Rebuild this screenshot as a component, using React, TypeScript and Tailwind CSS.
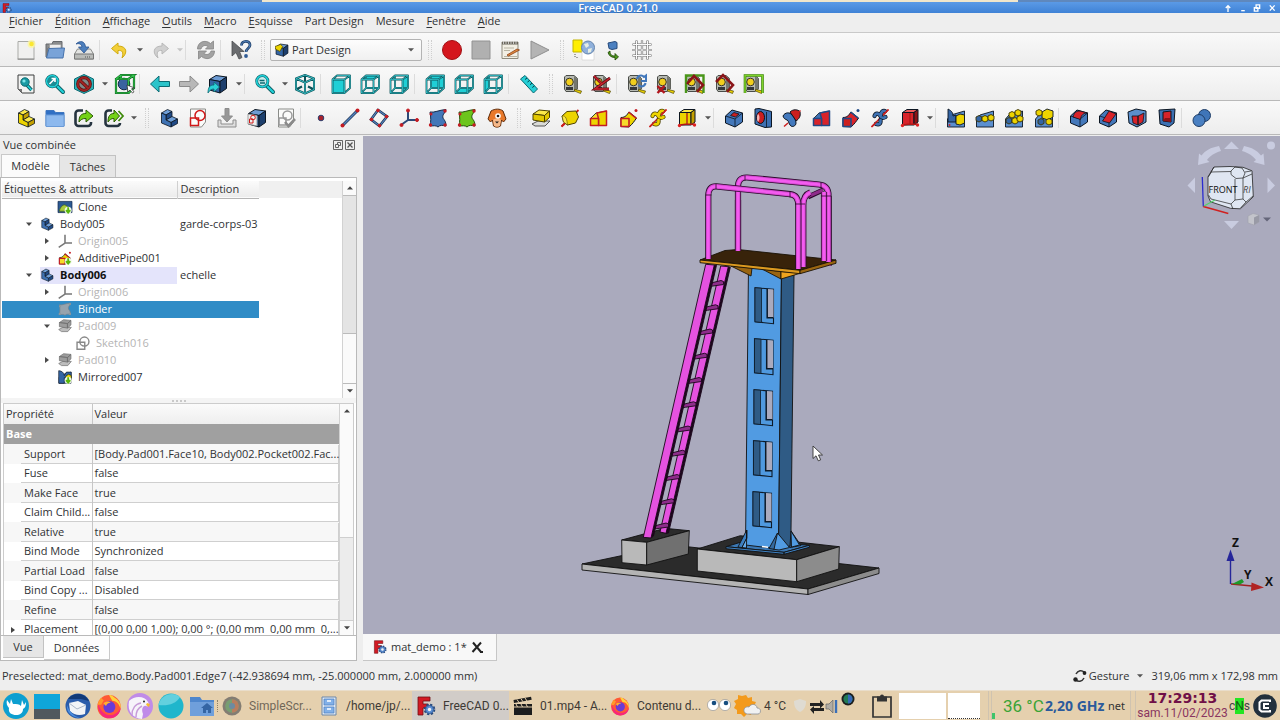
import React, { type ReactNode } from "react";

/* ---------- shared drawing pieces ---------- */

const BLUE = "#3465a4";
const NAVY = "#0b1521";
const TEAL = "#1fcfd6";

const Box = ({ t, l, r, s = NAVY }: { t: string; l: string; r: string; s?: string }) => (
  <g stroke={s} strokeWidth="1" strokeLinejoin="round">
    <path d="M1.500 5.500 8 1.500l10.500 1.500-6.500 4.500z" fill={t} />
    <path d="M1.500 5.500 12 7.500V19L1.500 16z" fill={l} />
    <path d="M12 7.500 18.500 3v11.500L12 19z" fill={r} />
  </g>
);

const Step = ({ a, b, c }: { a: string; b: string; c: string }) => (
  <g stroke={NAVY} strokeWidth=".8" strokeLinejoin="round">
    <path d="M2.500 5 8.500 1.500l4.500 2L7 7z" fill={a} />
    <path d="M7 7l6-3.500v5L7 12z" fill={c} />
    <path d="M7 12l6-3.500 5.500 2.500-6.500 3.500z" fill={a} />
    <path d="M12 14.500l6.500-3.500v4.500L12 19z" fill={c} />
    <path d="M2.500 5 7 7v5l5 2.500V19l-9.500-4z" fill={b} />
  </g>
);

const ViewCube = ({ face }: { face: string }) => {
  const faces: Record<string, ReactNode> = {
    front: <path d="M1.500 5.500h12V19h-12z" fill={TEAL} />,
    top: <path d="M1.500 5.500 6 1.500h13l-5.500 4z" fill={TEAL} />,
    right: <path d="M13.500 5.500 19 1.500V14l-5.500 5z" fill={TEAL} />,
    rear: <path d="M6 1.500h13V14H6z" fill={TEAL} />,
    bottom: <path d="M1.500 19 6 14h13l-5.500 5z" fill={TEAL} />,
    left: <path d="M1.500 5.500 6 1.500V14l-4.500 5z" fill={TEAL} />,
  };
  const outer = "M1.500 5.500h12V19h-12zM1.500 5.500 6 1.500h13l-5.500 4M19 1.500V14l-5.500 5";
  const lines = face === "front" ? outer : outer + "M6 1.500V14h13M6 14l-4.500 5";
  return (
    <g fill="none" strokeLinejoin="round">
      {faces[face]}
      <path d={lines} stroke="#0a5258" strokeWidth="1.800" />
      <path d={lines} stroke="#35c3ca" strokeWidth=".8" />
    </g>
  );
};

const Lens = ({ children }: { children?: ReactNode }) => (
  <g>
    <path d="m11 11 7 7" stroke="#0b5a60" strokeWidth="4" strokeLinecap="round" />
    <path d="m11 11 7 7" stroke={TEAL} strokeWidth="2.400" strokeLinecap="round" />
    <circle cx="7.300" cy="7.300" r="5.600" fill="#c9eced" stroke="#0b5a60" strokeWidth="2.800" />
    <circle cx="7.300" cy="7.300" r="5.600" fill="none" stroke={TEAL} strokeWidth="1.700" />
    {children}
  </g>
);

const Tape = ({ children }: { children?: ReactNode }) => (
  <g>
    <path d="M3 1.500h8l3.500 3V15L11 17.500H3L1.500 15V3z" fill="#b7bab3" stroke="#4a4d49" />
    <path d="M11 2l3.500 3v10L11 17z" fill="#74776f" />
    <circle cx="6.500" cy="8" r="3.800" fill="#f2cf1d" stroke="#34322a" />
    <path d="M3 13h7v3H3z" fill="#35373a" />
    <path d="m11.500 15.500 7 1.500-1 2.500-6-2.500z" fill="#edd400" stroke="#4e4300" strokeWidth=".7" />
    {children}
  </g>
);

const Doc = () => <path d="M2.500 1h15v13l-4 5h-11z" fill="#fbfbfa" stroke="#8a8c88" />;

const FreeCad = () => (
  <g>
    <path d="M2 1h12v4H7v3h5v4H7v7H2z" fill="#d31a24" stroke="#6e0f14" strokeWidth=".8" />
    <circle cx="13.500" cy="13.500" r="4.300" fill="#6e9bd8" stroke="#25477a" strokeWidth="3" strokeDasharray="2 1.380" />
    <circle cx="13.500" cy="13.500" r="4" fill="#5d8fd2" stroke="#2e5998" strokeWidth=".8" />
    <circle cx="13.500" cy="13.500" r="1.700" fill="#f2f2f2" />
  </g>
);

const Firefox = () => (
  <g>
    <circle cx="10" cy="10.500" r="9" fill="#ff5a36" />
    <path d="M10 1.500c3 0 4 2 5 2.500 3 2 4.500 5 3.800 8C18 9 16 6 12.500 6z" fill="#ffd23a" />
    <path d="M1.500 8c0 8 4 11.500 9 11.500s8.500-4 8.500-8.500c-1 3-4 6-8 6S3.500 14 1.500 8z" fill="#f7277b" />
    <path d="M1.200 9C2 6 3 5 4 3.500c.5 1 1 1.500 2 2L4 9z" fill="#ff9a2a" />
    <circle cx="10.300" cy="10.800" r="4.600" fill="#6a3bd6" />
    <path d="M5.700 8c2-2 5-1.500 5.500-.5-2 0-3 1-3.500 2.500z" fill="#ffb02e" />
  </g>
);

const Origin = ({ c, d }: { c: string; d: string }) => (
  <g stroke={c} fill={d}>
    <path d="M9 3v9M9 12h9M9 12l-7 5" strokeWidth="2" fill="none" />
    <circle cx="9" cy="2.500" r="1.500" stroke={d} />
    <circle cx="18" cy="12" r="1.500" stroke={d} />
    <circle cx="2.500" cy="17" r="1.500" stroke={d} />
  </g>
);

const Shape = ({ c, k, dot }: { c: string; k: string; dot: string }) => (
  <g>
    <path d="M2 4c4 1 9-2 16-2.500-1 4-4 5-3 8.500 1 2 3 3 3 8-4-1-6-1-8 1-2-2-5-1-8-1 1-5 1-8 0-14z" fill={c} stroke={k} />
    <circle cx="17" cy="3" r="1.700" fill={dot} />
    <circle cx="2.500" cy="17" r="1.700" fill={dot} />
    <circle cx="17" cy="17" r="1.700" fill={dot} />
    <circle cx="3" cy="6" r="1.500" fill={dot} />
  </g>
);

const Helix = ({ c, k }: { c: string; k: string }) => (
  <g strokeLinecap="round" fill="none">
    <path d="M18 2 2 18.500" stroke="#cc1f1f" strokeWidth="1.600" />
    <path d="M4.500 8c1-3 4-3 5.500-.5s3 3 5.500 1.500M6 16c3 1 5 0 4.500-4M11 7c0-3 1.500-4.500 4-4" stroke={k} strokeWidth="4.200" />
    <path d="M4.500 8c1-3 4-3 5.500-.5s3 3 5.500 1.500M6 16c3 1 5 0 4.500-4M11 7c0-3 1.500-4.500 4-4" stroke={c} strokeWidth="2.700" />
    <path d="m2 18.500 4-4M13.500 6.500 18 2" stroke="#cc1f1f" strokeWidth="1.600" />
  </g>
);

const Revolve = ({ c, k, r }: { c: string; k: string; r: string }) => (
  <g>
    <path d="M1.500 18.500 6 14.500M15.500 5 18.500 2" stroke="#cc1f1f" strokeWidth="1.800" />
    <path d="M2 8l5-4.500 9-.5 2.500 6-3 6-8 2-4-3z" fill={c} stroke={k} />
    <path d="M2 8c4-1 5 4 5.500 9l-4-3z" fill={r} stroke={k} strokeWidth=".6" />
    <path d="m1.500 18.500 3-3" stroke="#cc1f1f" strokeWidth="1.800" />
  </g>
);

const Loft = ({ c, d, e }: { c: string; d: string; e: string }) => (
  <g strokeLinejoin="round">
    <path d="M1.500 10.500 7 5l10.500-2v14.500h-16z" fill={d} stroke={NAVY} strokeWidth=".8" />
    <path d="M9.500 10.500 8 5l9.500-2v14.500h-8z" fill={c} stroke={e} strokeWidth="1.500" />
    <path d="M1.500 10.500h8v7h-8z" fill={c} stroke={e} strokeWidth="1.500" />
  </g>
);

const Pipe = ({ c, d, e }: { c: string; d: string; e: string }) => (
  <g strokeLinejoin="round">
    <path d="M2 9.500c5 0 6-3 8-5.500l7.500 6c-2 3-4 6-7.500 9l-8-.5z" fill={c} stroke={NAVY} />
    <path d="M2 10.500h8V18.500H2z" fill={d} stroke={e} strokeWidth="1.600" />
    <path d="m9.500 4 8 6.500" stroke={e} strokeWidth="1.600" />
    <circle cx="17" cy="2.500" r="1.500" fill={e} />
  </g>
);

const Prim = ({ t, l, r }: { t: string; l: string; r: string }) => (
  <g>
    <path d="M2.500 4.500 7 1.500h11l-4 3z" fill={t} stroke={NAVY} />
    <path d="M2.500 4.500H14V17H2.500z" fill={l} stroke={NAVY} />
    <path d="M14 4.500l4-3V14l-4 3z" fill={r} stroke={NAVY} />
    <path d="M10 5v11M10 16l-7 1M10 16l8 .5" stroke="#b01818" strokeWidth="1.300" />
    <circle cx="2.500" cy="17.500" r="1.700" fill="#d22" />
    <circle cx="17.500" cy="17" r="1.700" fill="#d22" />
  </g>
);

const Pattern = ({ children }: { children: ReactNode }) => (
  <g stroke={NAVY} strokeWidth=".9">
    <path d="M1.500 11 5 7l13.500-4V19h-17z" fill="#5b8fcf" />
    {children}
  </g>
);

const Blob = ({ x, y, c = "#edd400" }: { x: number; y: number; c?: string }) => (
  <path d={`M${x} ${y}l3-1.500 3 1.500v3.500l-3 1.500-3-1.500z`} fill={c} stroke="#3b3200" />
);

const Block = ({ children }: { children?: ReactNode }) => (
  <g strokeLinejoin="round">
    <path d="M1.500 8 8 2l10.500 3v9L11 19 1.500 15z" fill="#4478ba" stroke={NAVY} />
    <path d="M1.500 8 11 11l7.500-6M11 11v8" stroke={NAVY} strokeWidth=".8" fill="none" />
    {children}
  </g>
);

const icons: Record<string, ReactNode> = {
  new: (
    <g>
      <path d="M2 1.500h16V19H2z" fill="#f0f0ef" stroke="#a9aaa7" />
      <path d="M1.500 19.200h17" stroke="#777" strokeWidth=".8" />
      <circle cx="15.500" cy="4" r="4" fill="#fdf6a0" opacity=".8" />
      <circle cx="15.500" cy="4" r="2.300" fill="#fbe731" />
    </g>
  ),
  open: (
    <g>
      <path d="M1 4h6l1-2.500h9V8H3v9H1z" fill="#8a8c8d" stroke="#66696c" />
      <path d="M4.500 4.500H16V12H4.500z" fill="#ededed" stroke="#999" strokeWidth=".7" />
      <path d="M4 8.500 19.500 8 18 18H1.500z" fill="#79a3d8" stroke="#4571ab" />
    </g>
  ),
  save: (
    <g>
      <path d="M3.500 9h13l3 5v5H.5v-5z" fill="#e3e4e2" stroke="#8b8d8a" />
      <path d="M.5 14h19v5H.5z" fill="#b9bbb8" stroke="#777" />
      <path d="M11 17h6" stroke="#555" strokeDasharray="1 1" />
      <path d="M2 4c4-4 9-3 9.500 3h3.500l-5 6-5.500-6H8C7.500 4 5 3 2 4z" fill="#4d7fbd" stroke="#2c5590" strokeWidth=".8" />
    </g>
  ),
  undo: <path d="M8 3 1.500 8.500 8 14v-3.500c4-.5 6 1.500 4 7.500 6-5 5-12-4-12z" fill="#f3cf3a" stroke="#d0ab10" />,
  redo: <path d="M12 3l6.500 5.500L12 14v-3.500c-4-.5-6 1.500-4 7.500-6-5-5-12 4-12z" fill="#d0d0d0" stroke="#b8b8b8" />,
  refresh: (
    <g fill="#a2a2a2" stroke="#858585" strokeWidth=".8">
      <path d="M1.500 9C1.500 2 9-1 14.500 3.500L17.500 1v8H9.500l2.500-2.500C9.500 4.500 6 5.500 5 9z" />
      <path d="M18.500 11c0 7-7.500 10-13 5.500L2.500 19v-8h8L8 13.500c2.500 2 6 1 7-2.500z" />
    </g>
  ),
  whats: (
    <g>
      <path d="M1 1v15l4-3.500L8 19l3-1.500L8.500 11.500H13z" fill="#6a6c6f" stroke="#4a4c4f" strokeWidth=".8" />
      <path d="M10.500 5.500C10.500 0 19 0 19 5c0 3.500-4 3.500-4 7" fill="none" stroke="#24466f" strokeWidth="2.800" />
      <path d="M10.500 5.500C10.500 0 19 0 19 5c0 3.500-4 3.500-4 7" fill="none" stroke="#5a8ac6" strokeWidth="1" />
      <circle cx="15" cy="16" r="1.900" fill="#2f5b95" />
    </g>
  ),
  record: <circle cx="10" cy="10" r="9.500" fill="#d4161d" stroke="#a01014" />,
  stop: <path d="M1 1h18v18H1z" fill="#b0b0b0" stroke="#929292" />,
  macros: (
    <g>
      <path d="M2 2h16v16.500H2z" fill="#f2efe4" stroke="#8f8b7c" />
      <path d="M2 2h16v2.500H2z" fill="#6b675c" />
      <path d="M3.500 1v3M6 1v3M8.500 1v3M11 1v3M13.500 1v3M16 1v3" stroke="#ddd" strokeWidth=".8" />
      <path d="M4 8h10M4 10.500h6M4 16.500h13" stroke="#b8b4a4" />
      <path d="m7 15 10-6 2.500 1L8.500 16z" fill="#e08a3c" stroke="#8a3d16" strokeWidth=".8" />
    </g>
  ),
  play: <path d="M1 1v18l18-9z" fill="#b4b4b4" stroke="#8f8f8f" />,
  web: (
    <g>
      <path d="M-1 0h9v12H-1z" fill="#ffee00" stroke="#c2b400" />
      <path d="M8 10h12v10H8z" fill="#fff" stroke="#ccc" strokeWidth=".6" />
      <circle cx="14" cy="7.500" r="6.500" fill="#8fb0db" stroke="#6484ab" />
      <path d="M10 4l4-1 1 3-3 2zM14 9l4-1-1 4-3 1z" fill="#e6ede3" />
      <path d="M1 14v4M3 17v2" stroke="#555" strokeDasharray="1 1" />
    </g>
  ),
  part: (
    <g>
      <path d="M5 3l7-1.500 2 1v6l-5 1-3-1z" fill="#4b80c0" stroke="#274b7c" />
      <path d="M7 11c0 4 2 5 5 5v-2.500l3.500 3.500-3.500 3v-2.500c-4 0-6-2-7-5z" fill="#4e9a1e" stroke="#1d4204" strokeWidth=".8" />
    </g>
  ),
  grid: (
    <g fill="none">
      <path d="M4.500 .5v19M10 .5v19M15.500 .5v19M.5 4.500h19M.5 10h19M.5 15.500h19" stroke="#6a6a6a" strokeWidth="2.200" />
      <path d="M4.500 1v18M10 1v18M15.500 1v18M1 4.500h18M1 10h18M1 15.500h18" stroke="#fafafa" strokeWidth="1" />
    </g>
  ),
  fitall: (
    <g>
      <path d="M2 1h16v18H6l-4-4z" fill="#f3f3f2" stroke="#3d3f3e" />
      <path d="M2 15h4v4z" fill="#777" />
      <path d="m10 10 5.500 6" stroke="#0b5a60" strokeWidth="3.400" />
      <path d="m10 10 5.500 6" stroke={TEAL} strokeWidth="1.800" />
      <circle cx="9" cy="8" r="4.200" fill="#1a9ba4" stroke="#0b6a72" />
      <circle cx="8" cy="7" r="1.600" fill="#7ee5e9" />
    </g>
  ),
  fitsel: (
    <Lens>
      <circle cx="7.300" cy="7.300" r="4.800" fill="#1b8d95" />
      <path d="m4.500 10 5-5M6.500 4.500H10V8" stroke="#fff" strokeWidth="1.600" fill="none" />
    </Lens>
  ),
  style: (
    <g>
      <path d="M10 .5 19.500 5v10L10 19.500.5 15V5z" fill="#2cb3ba" stroke="#0b6a72" />
      <circle cx="10" cy="10" r="6.300" fill="#7f8a8a" stroke="#5a1414" strokeWidth="3.200" />
      <path d="M5.500 6l9 8.500" stroke="#5a1414" strokeWidth="3.200" />
      <circle cx="10" cy="10" r="6.300" fill="none" stroke="#a32222" strokeWidth="1.800" />
      <path d="M5.500 6l9 8.500" stroke="#a32222" strokeWidth="1.800" />
    </g>
  ),
  bbox: (
    <g fill="none">
      <circle cx="9" cy="10" r="5.800" fill="#3a639f" stroke="#15294a" />
      <path d="M1 5h12.500v14H1zM1 5l5-4h13l-5.500 4M19 1v13l-5.500 5M6 1v4" stroke="#0e5c1c" strokeWidth="2.200" />
      <path d="M1 5h12.500v14H1zM1 5l5-4h13l-5.500 4M19 1v13l-5.500 5M6 1v4" stroke="#2fc04a" strokeWidth="1.200" />
      <path d="m12 11 1 7 2-2 2.500 3 1.500-1.200-2.500-3 3-.8z" fill="#fff" stroke="#222" strokeWidth=".7" />
    </g>
  ),
  left: <path d="M.5 10 9 2v5.500h10.500v5H9V18z" fill="#2bc4ca" stroke="#0b6a72" />,
  right: <path d="M19.500 10 11 2v5.500H.5v5H11V18z" fill="#b8b8b8" stroke="#8b8b8b" />,
  linkview: (
    <g>
      <Box t="#6d9bd3" l="#3465a4" r="#1d3f6d" />
      <path d="M0 19c0-6 2-8 6-8V8l5.500 5L6 18v-3c-3 0-4 1-6 4z" fill="#2bd0d6" stroke="#0b6a72" strokeWidth=".8" />
    </g>
  ),
  zoom: (
    <Lens>
      <path d="M4.500 6.500h5M10 9H5" stroke="#0b6a72" strokeWidth="1.600" />
    </Lens>
  ),
  iso: (
    <g fill="none" strokeLinejoin="round">
      <path d="M10 1 19 4.500v11L10 19.500 1 15.500v-11zM1 4.500l9 4 9-4M10 8.500v11M10 1v6M1 15.500l6-3M19 15.500l-6-3" stroke="#0a5258" strokeWidth="2" />
      <path d="M10 1 19 4.500v11L10 19.500 1 15.500v-11zM1 4.500l9 4 9-4M10 8.500v11" stroke="#39bdc4" strokeWidth="1" />
    </g>
  ),
  vfront: <ViewCube face="front" />,
  vtop: <ViewCube face="top" />,
  vright: <ViewCube face="right" />,
  vrear: <ViewCube face="rear" />,
  vbottom: <ViewCube face="bottom" />,
  vleft: <ViewCube face="left" />,
  ruler: (
    <g>
      <path d="M1.500 5 6 1.500 18.500 15 14.500 19z" fill="#25cfd6" stroke="#0b6a72" />
      <path d="m8 4-2 1.500M10.500 6.500l-2 1.500M13 9.200l-2 1.500M15.300 12l-2 1.500" stroke="#063f44" />
    </g>
  ),
  tape: <Tape />,
  tapeang: (
    <Tape>
      <path d="M18 4 3 15h14M2 2l8 8" fill="none" stroke="#5c0f16" strokeWidth="2.800" />
      <path d="M18 4 3 15h14M2 2l8 8" fill="none" stroke="#c9202c" strokeWidth="1.500" />
    </Tape>
  ),
  taperef: (
    <Tape>
      <path d="M10 5a4 4 0 0 1 7-2l2-1.500V7h-5M18.500 9a4 4 0 0 1-7 2" fill="none" stroke="#4177bb" strokeWidth="2" />
    </Tape>
  ),
  tapedel: (
    <Tape>
      <path d="m1.500 12 7 7M8.500 12l-7 7" stroke="#b3151c" strokeWidth="2.400" />
    </Tape>
  ),
  tapeall: (
    <Tape>
      <path d="M1 19V1.500h17.500V19" fill="none" stroke="#4a961a" strokeWidth="2.400" />
      <path d="m2 10 7-8 9 9-6 7" fill="none" stroke="#8a1519" strokeWidth="2.600" />
    </Tape>
  ),
  tape3d: (
    <Tape>
      <path d="m1 8 7-7 10 10-6 7" fill="none" stroke="#8a1519" strokeWidth="2.600" />
    </Tape>
  ),
  tapedelta: (
    <Tape>
      <path d="M1 19V1.500h17.500V19" fill="none" stroke="#3a7d0b" strokeWidth="2.600" />
      <path d="M1 19V1.500h17.500V19" fill="none" stroke="#7ed32a" strokeWidth="1.400" />
    </Tape>
  ),
  ypart: <Step a="#fbe94a" b="#edd400" c="#c4a000" />,
  folder: (
    <g>
      <path d="M1 2.500h8l1.500 2H19V18H1z" fill="#2f6fc4" stroke="#3f76bf" />
      <path d="M1 7h18v11.500H1z" fill="#8db9ee" stroke="#6a9bd8" />
    </g>
  ),
  link: (
    <g>
      <path d="M9 2.500H4.500a3 3 0 0 0-3 3V15a3 3 0 0 0 3 3H14a3 3 0 0 0 3-3v-1" fill="none" stroke="#263440" strokeWidth="2.600" />
      <path d="M5 14c0-6 2-8.500 7-8.500V2l7 6-7 6v-3.500c-4 0-5 1-7 3.500z" fill="#73d216" stroke="#2b5a05" />
    </g>
  ),
  linkgrp: (
    <g>
      <path d="M8 2.500H4.500a3 3 0 0 0-3 3V15a3 3 0 0 0 3 3H13a3 3 0 0 0 3-3" fill="none" stroke="#263440" strokeWidth="2.600" />
      <path d="M4 14c0-6 2-8.500 6-8.500V2l5.500 6-5.500 6v-3.500c-3 0-4 1-6 3.500z" fill="#73d216" stroke="#2b5a05" />
      <path d="m14.500 3 4.500 5-4.500 5" fill="none" stroke="#3f8a0a" strokeWidth="1.800" />
    </g>
  ),
  body: <Step a="#6f9fd8" b="#3f72b3" c="#204a87" />,
  sketch: (
    <g>
      <Doc />
      <path d="M2.500 10h8v7.500h-8z" fill="none" stroke="#d01818" strokeWidth="1.500" />
      <circle cx="12" cy="7.500" r="5" fill="none" stroke="#d01818" strokeWidth="1.500" />
    </g>
  ),
  import: (
    <g fill="#bdbdbd" stroke="#8d8d8d">
      <path d="M1 12h3v4h12v-4h3v7H1z" fill="#dedede" />
      <path d="M8 .5h4V8h3.500L10 14 4.500 8H8z" fill="#979797" />
    </g>
  ),
  mapsketch: (
    <g>
      <Box t="#6d9bd3" l="#3465a4" r="#1d3f6d" />
      <path d="M1 6l9 1.500V18L1 16z" fill="#eee" stroke="#888" strokeWidth=".8" />
      <circle cx="6" cy="9.500" r="2.300" fill="none" stroke="#d01818" />
      <path d="M2.500 11H6v4H2.500z" fill="none" stroke="#d01818" />
    </g>
  ),
  valid: (
    <g>
      <Doc />
      <path d="M3 10h7v7H3z" fill="none" stroke="#999" strokeWidth="1.500" />
      <circle cx="11.500" cy="7.500" r="4.500" fill="none" stroke="#999" strokeWidth="1.500" />
      <path d="m9 14 3.500 4L19 11" fill="none" stroke="#8a8a8a" strokeWidth="2.600" />
    </g>
  ),
  point: <circle cx="10" cy="10" r="2.800" fill="#a8222c" stroke="#2d3f6e" />,
  line: (
    <g>
      <path d="M3 17 17 3" stroke="#1b3050" strokeWidth="2.800" />
      <path d="M3 17 17 3" stroke="#5584bf" strokeWidth="1.400" />
      <circle cx="2.500" cy="17.500" r="2" fill="#c41c24" />
      <circle cx="17.500" cy="2.500" r="2" fill="#c41c24" />
    </g>
  ),
  plane: (
    <g>
      <path d="M9 2 18 8.500 10.500 18 2 11.500z" fill="none" stroke="#1b3050" strokeWidth="2.600" />
      <path d="M9 2 18 8.500 10.500 18 2 11.500z" fill="none" stroke="#5584bf" strokeWidth="1.200" />
      <g fill="#c41c24"><circle cx="9" cy="2.500" r="1.800" /><circle cx="17.500" cy="8.500" r="1.800" /><circle cx="10.500" cy="17.500" r="1.800" /><circle cx="2.500" cy="11.500" r="1.800" /></g>
    </g>
  ),
  lcs: <Origin c="#2c4a78" d="#c41c24" />,
  shape: <Shape c="#4277b8" k="#15294a" dot="#c41c24" />,
  subshape: <Shape c="#6cc51c" k="#24500a" dot="#c41c24" />,
  clone: (
    <g>
      <path d="M4 3c4-2.500 9-2.500 12 0l3 8-2.500 3-2-2-1 6c-2 1.500-5 1.500-7 0l-1-6-2 2L1 11z" fill="#e8792b" stroke="#5e2a08" />
      <path d="M6 12c2-2 6-2 8 0l-1 6c-2 1-4 1-6 0z" fill="#f6b98a" />
      <circle cx="11" cy="8" r="2.800" fill="#fff" /><circle cx="11" cy="8" r="1.300" fill="#111" />
      <path d="M8 13.500h4l-2 2z" fill="#222" />
    </g>
  ),
  pad: (
    <g strokeLinejoin="round">
      <path d="M1 16l6-3h12l-5 5H4z" fill="#dadbd8" stroke="#555" />
      <path d="M2 6l6-4 10.500 1-5 4.500z" fill="#fbe94a" stroke="#4e4300" />
      <path d="M2 6l11.500 1.500V14L2 12zM13.500 7.500l5-4.500v6.500l-5 4.500z" fill="#e2c800" stroke="#4e4300" />
    </g>
  ),
  revol: <Revolve c="#edd400" k="#4e4300" r="#fbe94a" />,
  loft: <Loft c="#edd400" d="#f6dc2a" e="#c41c24" />,
  pipe: <Pipe c="#edd400" d="#f6dc2a" e="#c41c24" />,
  helix: <Helix c="#edd400" k="#4e4300" />,
  prim: <Prim t="#fbe94a" l="#edd400" r="#c4a000" />,
  pocket: (
    <Block>
      <path d="M6.500 7.500l3.500-3 5 1.500-3.500 3z" fill="#cc1f1f" stroke={NAVY} strokeWidth=".8" />
    </Block>
  ),
  hole: (
    <g>
      <path d="M2 1l4-.5 12.500 3V19L12 19.500 2 16z" fill="#3d70b2" stroke={NAVY} />
      <path d="M13.500 4v15" stroke={NAVY} strokeWidth=".8" />
      <ellipse cx="7.500" cy="9.500" rx="4" ry="6" fill="#cc1f1f" stroke={NAVY} />
      <path d="M5 6c2 1 2 6 0 8-1.500-2-1.500-6 0-8z" fill="#f3b5b5" />
    </g>
  ),
  groove: (
    <g>
      <path d="M8 4c3-3 8-3 10 0 1 4-1 7-4 9z" fill="#cc1f1f" stroke={NAVY} />
      <path d="M1 8c2-4 7-4 9-1s4 5 4 8-4 5-6 2-1-4-3-5-3-1-4-4z" fill="#4379bd" stroke={NAVY} />
      <path d="M2 18.500 6 15M13 8l5.500-5.500" stroke="#cc1f1f" strokeWidth="1.500" />
    </g>
  ),
  subloft: <Loft c="#d8232a" d="#3f72b3" e="#204a87" />,
  subpipe: <Pipe c="#d8232a" d="#cc1f1f" e="#204a87" />,
  subhelix: <Helix c="#3f72b3" k={NAVY} />,
  subprim: <Prim t="#ef5a5a" l="#d8232a" r="#8e1216" />,
  mirror: (
    <Pattern>
      <path d="M2 1c4 2 5 4 5 7l3-1v7H2z" fill={BLUE} />
      <path d="M10 8l4-2 4.500 1v8L14 17l-4-1z" fill="#edd400" />
      <circle cx="3.500" cy="17" r="1" fill="#c22" stroke="none" />
    </Pattern>
  ),
  linpat: (
    <Pattern>
      <Blob x={1} y={9} c={BLUE} /><Blob x={7} y={9} /><Blob x={13} y={8} />
    </Pattern>
  ),
  polpat: (
    <Pattern>
      <Blob x={5} y={5} /><Blob x={11} y={3} /><Blob x={2} y={11} c={BLUE} /><Blob x={8} y={11} /><Blob x={13} y={9} />
    </Pattern>
  ),
  multi: (
    <Pattern>
      <path d="M8 4l5-3 6 2v6l-5 3-6-2z" fill="#edd400" /><Blob x={2} y={3} c="#edd400" /><Blob x={4} y={12} c={BLUE} /><Blob x={12} y={12} />
    </Pattern>
  ),
  fillet: (
    <Block>
      <path d="M4 9c1-4 3-6 7-6l7.500 2c-4 0-6.500 2-7 6.500z" fill="#d8232a" stroke={NAVY} strokeWidth=".8" />
    </Block>
  ),
  chamfer: (
    <Block>
      <path d="M4.500 13 11 3l7 3-6.500 9z" fill="#d8232a" stroke={NAVY} strokeWidth=".8" />
    </Block>
  ),
  draft: (
    <g strokeLinejoin="round">
      <path d="M1 4l8-3 10 2v11l-9 5-8-4z" fill="#5b8fcd" stroke={NAVY} />
      <path d="M5 8h6v9l-5-2zM11 8l6-3-1 9-5 3z" fill="#d8232a" stroke={NAVY} strokeWidth=".8" />
    </g>
  ),
  thick: (
    <g strokeLinejoin="round">
      <path d="M2 2l16-1-1 14-5 4-9-3z" fill="#3d70b2" stroke={NAVY} />
      <path d="M6 4l8-1v11l-8-1z" fill="#d8232a" stroke={NAVY} />
      <path d="M6 13l2-3h6v4z" fill="#8e1216" />
    </g>
  ),
  bool: (
    <g stroke="#1d3c66">
      <circle cx="12.500" cy="7.500" r="6" fill="#3f75b8" />
      <circle cx="7" cy="12.500" r="6" fill="#4a80c2" />
    </g>
  ),
  freecad: <FreeCad />,
};

const Pic = ({ name, small }: { name: string; small?: boolean }) => (
  <svg viewBox="0 0 20 20" aria-hidden="true" className={small ? "size-3.5 shrink-0 overflow-visible" : "size-5 shrink-0 overflow-visible"}>
    {icons[name]}
  </svg>
);

/* ---------- toolbars ---------- */

const Caret = ({ dim }: { dim?: boolean }) => (
  <svg viewBox="0 0 6 4" aria-hidden="true" className={dim ? "h-1 w-1.5 text-[#c4c4c4]" : "h-1 w-1.5 text-[#555]"}>
    <path d="M0 .3h6L3 3.600z" fill="currentColor" />
  </svg>
);

const Grip = () => (
  <span className="flex w-[15px] shrink-0 justify-center gap-0.5">
    <span className="h-5 border-l border-dotted border-[#cfcfcf]" />
    <span className="h-5 border-l border-dotted border-[#cfcfcf]" />
  </span>
);

const Sep = () => <span className="mr-[5px] h-5 w-px shrink-0 bg-[#dcdcdc]" />;

const Tools = ({ names }: { names: string[] }) => (
  <div className="flex shrink-0 items-center">
    {names.map((n) =>
      n.startsWith("v:") ? (
        <button key={n} type="button" aria-label={n.slice(2)} className="flex h-6 w-[11px] items-center justify-center">
          <Caret dim={n === "v:redo list"} />
        </button>
      ) : (
        <button key={n} type="button" aria-label={n} className="flex h-7 w-[29px] items-center justify-center nth-[3n]:w-[30px]">
          <Pic name={n} />
        </button>
      ),
    )}
  </div>
);

const Bar = ({ children }: { children: ReactNode }) => (
  <div role="toolbar" className="flex h-[34px] shrink-0 items-center overflow-hidden border-b border-[#b9b9b9] bg-linear-to-b from-[#f9f9f9] to-[#ededed] pl-[11px]">
    {children}
  </div>
);

const menus = [
  ["", "F", "ichier"], ["", "É", "dition"], ["", "A", "ffichage"], ["", "O", "utils"], ["", "M", "acro"],
  ["", "E", "squisse"], ["Part Design", "", ""], ["Mesure", "", ""], ["", "F", "enêtre"], ["", "A", "ide"],
];

/* ---------- model tree ---------- */

type Node = { label: string; depth: number; icon: string; open?: boolean; closed?: boolean; dim?: boolean; desc?: string; state?: "active" | "selected" };

const nodes: Node[] = [
  { label: "Clone", depth: 2, icon: "tClone" },
  { label: "Body005", depth: 1, icon: "body", open: true, desc: "garde-corps-03" },
  { label: "Origin005", depth: 2, icon: "tOrigin", closed: true, dim: true },
  { label: "AdditivePipe001", depth: 2, icon: "tPipe", closed: true },
  { label: "Body006", depth: 1, icon: "body", open: true, desc: "echelle", state: "active" },
  { label: "Origin006", depth: 2, icon: "tOrigin", closed: true, dim: true },
  { label: "Binder", depth: 2, icon: "tBinder", state: "selected" },
  { label: "Pad009", depth: 2, icon: "tPad", open: true, dim: true },
  { label: "Sketch016", depth: 3, icon: "tSketch", dim: true },
  { label: "Pad010", depth: 2, icon: "tPad", closed: true, dim: true },
  { label: "Mirrored007", depth: 2, icon: "tMirror" },
];

const Tip = () => (
  <g>
    <circle cx="14.500" cy="14.500" r="5" fill="#eef7e6" />
    <path d="M14.500 10.500v7M11.500 14.500l3 3.500 3-3.500" stroke="#5cb80c" strokeWidth="2.600" fill="none" />
  </g>
);

icons.tClone = <g><path d="M0 2h20v16H0z" fill="#2d5a94" stroke="#122a4a" /><path d="M2 16c1-6 5-9 7-9s7 3 9 9z" fill="#a9c93c" stroke="#4a6a10" /><Tip /></g>;
icons.tOrigin = <g stroke="#777" strokeWidth="2.200" fill="none"><path d="M10 1v12h10M10 13l-9 6" /></g>;
icons.tPipe = <g><Pipe c="#edd400" d="#f6dc2a" e="#c41c24" /><Tip /></g>;
icons.tBinder = <Shape c="#97a3ad" k="#77828c" dot="#8b979f" />;
icons.tPad = (
  <g stroke="#6f6f6f">
    <path d="M1 15l6-3h12l-5 6H5z" fill="#bdbdbd" />
    <path d="M2 5l6-4 10.500 1-5 4.500zM2 5l11.500 1.500V13L2 11zM13.500 6.500l5-4.500v6.500l-5 4.500z" fill="#9c9c9c" />
  </g>
);
icons.tSketch = <g stroke="#888" strokeWidth="2" fill="none"><path d="M1.500 9h11v10h-11z" /><circle cx="12" cy="8" r="6.500" /></g>;
icons.tMirror = (
  <g>
    <Pattern><path d="M1 1c4 0 8 3 8 7l3-5h7v8H9v8H1z" fill={BLUE} /><path d="M11 9l4-3 4 2v6h-8z" fill="#edd400" /></Pattern>
    <Tip />
  </g>
);

const indent: Record<number, string> = { 1: "pl-5", 2: "pl-[38px]", 3: "pl-14" };

const Twist = ({ node }: { node: Node }) => (
  <span className="flex w-[18px] shrink-0 justify-start pl-1">
    {node.open || node.closed ? (
      <svg viewBox="0 0 6 6" aria-hidden="true" className="size-1.5">
        <path d={node.open ? "M0 1.500h6L3 5z" : "M1 0v6l4-3z"} fill="#4a4a4a" />
      </svg>
    ) : null}
  </span>
);

const TreeRow = ({ node }: { node: Node }) => {
  const sel = node.state === "selected";
  const act = node.state === "active";
  return (
    <tr className={sel ? "h-[17px] bg-[#308cc6] text-white" : node.dim ? "h-[17px] text-[#b4b4b4]" : "h-[17px]"}>
      <td className="p-0">
        <div className={`flex h-[17px] items-center ${indent[node.depth]}`}>
          <Twist node={node} />
          <span className={act ? "flex h-[17px] flex-1 items-center gap-1.5 bg-[#e4e4fb] font-bold text-[#111]" : "flex h-[17px] flex-1 items-center gap-1.5"}>
            <Pic name={node.icon} small />
            {node.label}
          </span>
        </div>
      </td>
      <td className="p-0 pl-[3px] whitespace-nowrap">{node.desc}</td>
    </tr>
  );
};

const ScrollBar = ({ thumb }: { thumb: "tree" | "props" }) => (
  <div className="flex w-3.5 shrink-0 flex-col border-l border-[#d2d2d2] bg-[#e4e4e4]">
    <span className="flex h-3.5 items-center justify-center bg-[#fafafa]">
      <svg viewBox="0 0 6 4" aria-hidden="true" className="h-1 w-1.5"><path d="M0 3.600h6L3 .3z" fill="#444" /></svg>
    </span>
    <span className={thumb === "tree" ? "flex-1 border-t border-[#bbb]" : "flex-1 bg-[#fafafa]"} />
    <span className={thumb === "tree" ? "h-[51px] border-y border-[#bbb] bg-[#fafafa]" : "h-[84px] border-y border-[#cfcfcf] bg-[#ececec]"} />
    <span className="flex h-3.5 items-center justify-center bg-[#fafafa]">
      <svg viewBox="0 0 6 4" aria-hidden="true" className="h-1 w-1.5"><path d="M0 .3h6L3 3.600z" fill="#444" /></svg>
    </span>
  </div>
);

const props = [
  ["Support", "[Body.Pad001.Face10, Body002.Pocket002.Fac..."],
  ["Fuse", "false"],
  ["Make Face", "true"],
  ["Claim Child...", "false"],
  ["Relative", "true"],
  ["Bind Mode", "Synchronized"],
  ["Partial Load", "false"],
  ["Bind Copy ...", "Disabled"],
  ["Refine", "false"],
  ["Placement", "[(0,00 0,00 1,00); 0,00 °; (0,00 mm  0,00 mm  0,..."],
];

const SidePanel = () => (
  <aside className="flex w-[357px] shrink-0 flex-col bg-[#eeeeee]">
    <div className="flex h-[18px] items-center justify-between pr-0.5 pl-[3px]">
      <h2>Vue combinée</h2>
      <span className="flex gap-0.5">
        <button type="button" aria-label="Détacher" className="size-2.5">
          <svg viewBox="0 0 10 10" fill="none" stroke="#555" className="size-2.5"><path d="M.5.5h9v9h-9zM2.500 4.500h3v3h-3zM4.500 4.500v-2h3v3h-2" strokeWidth=".9" /></svg>
        </button>
        <button type="button" aria-label="Fermer" className="size-2.5">
          <svg viewBox="0 0 10 10" fill="none" stroke="#555" className="size-2.5"><path d="M.5.5h9v9h-9z" strokeWidth=".9" /><path d="m2.500 2.500 5 5M7.500 2.500l-5 5" strokeWidth="1.300" /></svg>
        </button>
      </span>
    </div>
    <div role="tablist" className="flex h-[23px] items-end px-px">
      <button type="button" role="tab" aria-selected="true" className="h-[23px] w-[59px] border-x border-t border-[#c9c9c9] bg-[#fbfbfb]">Modèle</button>
      <button type="button" role="tab" aria-selected="false" className="h-[22px] w-14 border-t border-r border-[#c2c2c2] bg-[#e6e6e6]">Tâches</button>
    </div>
    <div className="flex min-h-0 flex-1 flex-col border border-[#b9b9b9] bg-white">
      <div className="flex min-h-0 flex-1 pt-[3px] pl-px">
        <div className="flex-1 overflow-hidden bg-linear-to-b from-[#f0f0f0] from-[17px] to-white to-[17px]">
          <table className="w-[257px] table-fixed border-collapse">
            <thead>
              <tr className="h-[17px] border-b border-[#b5b5b5] bg-linear-to-b from-[#fbfbfb] to-[#ececec] text-left">
                <th scope="col" className="w-[175px] border-r border-[#d0d0d0] p-0 pl-0.5 leading-4 font-normal whitespace-nowrap">Étiquettes &amp; attributs</th>
                <th scope="col" className="p-0 pl-[3px] leading-4 font-normal">Description</th>
              </tr>
            </thead>
            <tbody>
              {nodes.map((n) => <TreeRow key={n.label} node={n} />)}
            </tbody>
          </table>
        </div>
        <ScrollBar thumb="tree" />
      </div>
      <div className="flex h-[5px] shrink-0 items-center justify-center bg-[#f4f4f4]">
        <span className="w-3.5 border-t-2 border-dotted border-[#c9c9c9]" />
      </div>
      <div className="mx-0.5 flex h-[232px] shrink-0 overflow-hidden border-x border-t border-[#cccccc]">
        <div className="min-w-0 flex-1 overflow-hidden">
          <table className="w-full table-fixed border-collapse">
            <thead>
              <tr className="h-5 bg-linear-to-b from-[#fbfbfb] to-[#eeeeee] text-left">
                <th scope="col" className="w-[88px] border-r border-[#c6c6c6] p-0 pl-0.5 font-normal">Propriété</th>
                <th scope="col" className="p-0 pl-0.5 font-normal">Valeur</th>
              </tr>
            </thead>
            <tbody>
              <tr className="h-5 bg-[#a0a0a0] text-left text-white">
                <th scope="colgroup" colSpan={2} className="p-0 pl-0.5 font-bold">Base</th>
              </tr>
              {props.map(([k, v]) => (
                <tr key={k} className="h-5 odd:h-[19px] even:bg-[#f7f7f7]">
                  <td className="border-r border-[#c6c6c6] p-0">
                    <div className="flex items-center">
                      <span className="flex w-[17px] shrink-0 justify-center">
                        {k === "Placement" ? <svg viewBox="0 0 4 6" aria-hidden="true" className="h-1.5 w-1"><path d="M0 0v6l4-3z" fill="#444" /></svg> : null}
                      </span>
                      <span className="h-[19px] flex-1 border-b border-[#cfcfcf] pl-[3px] leading-[18px] whitespace-nowrap">{k}</span>
                    </div>
                  </td>
                  <td className="p-0">
                    <div className="h-[19px] border-r border-b border-[#cfcfcf] pl-0.5 leading-[18px] whitespace-pre">{v}</div>
                  </td>
                </tr>
              ))}
            </tbody>
          </table>
        </div>
        <ScrollBar thumb="props" />
      </div>
      <div role="tablist" className="flex h-[25px] shrink-0 items-start border-t border-[#b9b9b9] pl-0.5">
        <button type="button" role="tab" aria-selected="false" className="h-[22px] w-[41px] border-r border-b border-[#c2c2c2] bg-[#e6e6e6]">Vue</button>
        <button type="button" role="tab" aria-selected="true" className="h-6 w-[66px] border-r border-b border-[#c9c9c9] bg-[#fdfdfd]">Données</button>
      </div>
    </div>
  </aside>
);

/* ---------- 3D view ---------- */

const Tube = ({ d }: { d: string }) => (
  <g fill="none" strokeLinejoin="round">
    <path d={d} stroke="#2a0a2a" strokeWidth="6.200" />
    <path d={d} stroke="#d248cf" strokeWidth="4.600" />
    <path d={d} stroke="#f45cf0" strokeWidth="2.600" />
  </g>
);

const Opening = ({ i }: { i: number }) => {
  const x = 755 - i * 0.5;
  const y = 287.7 + i * 51;
  return (
    <g stroke="#0d1a28" strokeWidth=".8">
      <path d={`M${x} ${y}l18.500 1.500v34.500l-18.500-2z`} fill="#4f99df" strokeWidth="1.100" />
      <path d={`M${x} ${y}l6.500.5v34.300l-6.500-.8z`} fill="#2f5b85" />
      <path d={`M${x + 12.5} ${y + 1.3}l6 .5v28.500l-6-.8z`} fill="#aaaabd" stroke="none" />
      <path d={`M${x + 12.2} ${y + 1}v29h6.300`} fill="none" strokeWidth="1.500" />
    </g>
  );
};

const Model = () => (
  <svg viewBox="363 136 917 498" preserveAspectRatio="xMidYMid meet" role="img" aria-label="Vue 3D du modèle" className="h-full w-full">
    <g stroke="#111" strokeWidth=".9" strokeLinejoin="round">
      <path d="M582 564 672 545l207 23-71 21z" fill="#2b2b2b" />
      <path d="M582 564l226 25v5.500L582 570z" fill="#b4b4b4" />
      <path d="M808 589l71-21v5.500l-71 21z" fill="#8c8c8c" />
      <path d="M621.700 540 665 528.300l24.300 2.400-42.600 11.600z" fill="#2b2b2b" />
      <path d="M621.700 540l25 2.300V565l-24.700-2.300z" fill="#b9b9b9" />
      <path d="M646.700 542.300l42.600-11.600-1 23.300-41.600 11z" fill="#707070" />
      <path d="M697.300 549l43-13.300 99 11-42.600 13z" fill="#2b2b2b" />
      <path d="M697.300 549l99.400 10.700v22L697.300 571z" fill="#b9b9b9" />
      <path d="M796.700 559.700l42.600-13-.6 22.300-42 12.700z" fill="#8c8c8c" />
      <path d="M726 546.700l22-6.700 61.300 5.300-25.300 7z" fill="#3b78b4" />
      <path d="M726 546.700l58 5.600v2l-58-5.600zM784 552.300l25.300-7v2l-25.300 7z" fill="#3f82c4" />
      <path d="M789 528l12 17.500-11 2z" fill="#3d7fc0" />
      <path d="M748.500 266l33 6-3 277-33-4z" fill="#519be2" />
      <path d="M781.500 272l12.500 3-3 256-1 15-11.500 3z" fill="#2f5b85" />
      <path d="M746.700 530l-8.700 17 4 .5 4.700-9z" fill="#3d7fc0" />
      <path d="M746.700 530v8l-4.700 9.500 4.500.5z" fill="#63a9ea" />
      <path d="M777.500 533l-8.500 15.500 5 .8 5-9z" fill="#346a9f" />
      <path d="M777.500 533l12 14.500-10.500 2.500-5-.7z" fill="#519be2" />
      <path d="M762 546.500l6 .7" stroke="#fff" strokeWidth="1.600" />
      <path d="M791 531l8.500 14-8 2z" fill="#519be2" />
    </g>
    {[0, 1, 2, 3, 4].map((i) => <Opening key={i} i={i} />)}
    <g stroke="#1a061a" strokeWidth=".9" strokeLinejoin="round">
      <path d="M728.300 266.700l2 .6L668.500 533l-2.500.3z" fill="#1d081d" />
      <path d="M720.700 266l7.600.7L666 533.300l-6-1.300z" fill="#e552e0" />
      {Array.from({ length: 11 }, (_, i) => {
        const x = 711 - i * 5.5;
        const y = 283 + i * 24.25;
        return <path key={i} d={`M${x} ${y}l10-2.500 2.500 1v3l-10.500 1.500-3 .5z`} fill="#8d2d8a" />;
      })}
      <path d="M714.300 265l2.200.3L653.500 536l-2.500 2z" fill="#1d081d" />
      <path d="M705.700 264.300l8.600.7L651 538l-7.700-.7z" fill="#e552e0" />
    </g>
    <Tube d="M738 251V187q0-10 9-9.500l72 7q9.500 1 9.500 11V266" />
    <g stroke="#1a1206" strokeWidth=".9" strokeLinejoin="round">
      <path d="M731 266l21 2-1 8z" fill="#9a6510" />
      <path d="M762 269l19 2.500v7.500z" fill="#9a6510" />
      <path d="M781 271.500l20 1.500-20 6z" fill="#eea41e" />
      <path d="M700 260l25-9.500 13-1 98 10.500-36 10.300z" fill="#38230a" />
      <path d="M700 260l100 10.300v3.400l-100-11z" fill="#dc9a20" />
      <path d="M800 270.300l36-10.300v3.300l-36 10.400z" fill="#9a6510" />
    </g>
    <Tube d="M738 251V200" />
    <Tube d="M828.500 196V262" />
    <path d="m808 197 15-7" stroke="#2a0a2a" strokeWidth="5" />
    <path d="m808 196.500 15-6.500" stroke="#8d2d8a" strokeWidth="3.200" />
    <Tube d="M824 261V192" />
    <Tube d="M803.300 267V205q0-10 7-12.500" />
    <Tube d="M708.300 259V196q0-10 8-9.600l74 7.800q8 1 8 11V269" />
    <path d="M705.500 195h6M716 184v5M790 191.500v6M795 204h10M745 175.500v5M821 182v6M821 196h10" stroke="#2a0a2a" strokeWidth=".8" />
    <path d="M813 446v12.500l3-2.700 2.300 5 2.400-1-2.200-4.800h4z" fill="#fff" stroke="#333" strokeWidth=".9" />
  </svg>
);

const NavCube = () => (
  <svg viewBox="1185 138 95 92" role="img" aria-label="Cube de navigation" className="absolute top-0.5 right-0 h-[92px] w-[95px]">
    <g fill="#c9cce0">
      <path d="M1224 149h15l-7.500-7.500zM1224 221h15l-7.500 8zM1187.500 185.500l7.500-8v15.500zM1275 185.500l-7.500-8v15.500z" />
      <circle cx="1271" cy="145.500" r="4" />
      <path d="M1219 146l2 5c-7 2-11 5-14 9l2.500 2-11.500 3 1-11.500 2.500 2c4-5 9-8 17.500-9.500z" />
      <path d="M1244 146l-2 5c7 2 11 5 14 9l-2.500 2 11 3-1-11.500-2.500 2c-4-5-9-8-17-9.500z" />
    </g>
    <path d="M1214 167l16-.5 13 .8 9 3.500 1.300 26-13 12-9.800-.5-20-6.500-2.500-6v-19z" fill="#dfe6f2" stroke="#222" strokeWidth=".8" />
    <path d="M1211 172l20-.5M1208.300 177l3-5M1211 172l3-5M1231 171l4-4 7 1 3 5-2 5-7 .5-5-4zM1235 179v21l-4 4M1243 178v21M1235 200l8-1 3 3-5.500 6M1231 204l-20-5M1231 204l2 5M1243 178l9-4M1245 172l6-1M1246 202l7-6M1211 199l-2.500-4" fill="none" stroke="#222" strokeWidth=".7" />
    <text x="1208.500" y="193" fontFamily="Open Sans, sans-serif" fontSize="9" fill="#111">FRONT</text>
    <text x="1243" y="193" fontFamily="Open Sans, sans-serif" fontSize="9" fontStyle="italic" fill="#444">RI</text>
    <path d="M1202.300 177l1 29.500" stroke="#2b2bd0" strokeWidth="1.300" />
    <path d="M1203.300 206.500l25 7" stroke="#d02020" strokeWidth="1.600" />
    <path d="M1204 206l11-6" stroke="#52d06a" strokeWidth="1.200" />
    <path d="M1248 216l5-2.500 6 1.500v7l-5 3-6-2z" fill="#c3c4cb" stroke="#a0a1ad" strokeWidth=".6" />
    <path d="M1254 217.500v7.500l5-3v-7z" fill="#999aa6" />
    <path d="M1263 217.500h8l-4 4z" fill="#65667a" />
  </svg>
);

const AxisCross = () => (
  <svg viewBox="1225 534 55 60" role="img" aria-label="Axes X Y Z" className="absolute right-0 bottom-10 h-[60px] w-[55px]">
    <path d="M1230.500 584v-24" stroke="#26269a" strokeWidth="1.400" />
    <path d="M1230.500 549.500l-4 11.500h8z" fill="#26269a" />
    <path d="M1231 584l21 2" stroke="#a02020" strokeWidth="1.400" />
    <path d="M1264 587.500l-12.500-5-.5 8.500z" fill="#b12424" />
    <path d="M1232 584l10-5 2 3-4 2.500z" fill="#1d9a2a" />
    <g fontFamily="Open Sans, sans-serif" fontSize="12" fontWeight="700" fill="#111">
      <text x="1232" y="547">Z</text>
      <text x="1244" y="579">Y</text>
      <text x="1265" y="586">X</text>
    </g>
  </svg>
);

/* ---------- desktop panel ---------- */

const Launch = ({ label, children }: { label: string; children: ReactNode }) => (
  <button type="button" aria-label={label} className="flex h-[30px] w-[31px] shrink-0 items-center justify-center">
    <svg viewBox="0 0 26 26" className="size-[26px]">{children}</svg>
  </button>
);

const Task = ({ text, active, faint, children }: { text: string; active?: boolean; faint?: boolean; children: ReactNode }) => (
  <button type="button" className={`flex h-[29px] w-[97px] shrink-0 items-center gap-[7px] pl-1 text-xs text-[#3e3a35] ${active ? "bg-[#d1ccc8]" : ""} ${faint ? "opacity-70" : ""}`}>
    <svg viewBox="0 0 20 20" aria-hidden="true" className="size-5 shrink-0">{children}</svg>
    <span className="whitespace-nowrap">{text}</span>
  </button>
);

const Taskbar = () => (
  <footer className="flex h-[30px] shrink-0 items-center overflow-hidden border-t border-[#e9ddca] bg-[#e5d0ae] font-['Roboto','Liberation_Sans',sans-serif]">
    <Launch label="Menu">
      <circle cx="13" cy="13" r="13" fill="#0d9fd0" />
      <path d="M4 7l3 4 1-5 2 5c4 0 6 0 8 2l1-6 2 5 2-3c0 4-1 6-3 7 0 4-3 6-7 6s-8-2-7-7c-2-2-3-5-2-8z" fill="#fff" />
    </Launch>
    <Launch label="Bureau"><path d="M0 1h26v15H0z" fill="#0fa6da" /><path d="M0 16h26v10H0z" fill="#51595e" /></Launch>
    <Launch label="Courriel">
      <circle cx="13" cy="13" r="12.500" fill="#2a5caa" /><path d="M3 6C8-1 20-1 24 8l-8-2z" fill="#123a78" />
      <path d="M4 10l9-2 8 4-1 9c-6 2-11 1-15-3z" fill="#f2f4f7" /><path d="m4 10 8 6 9-4" fill="none" stroke="#aab6c8" /><path d="M2 12c-1 8 6 13 13 13C8 23 4 18 2 12z" fill="#4b8ee0" />
    </Launch>
    <Launch label="Firefox"><g transform="scale(1.300)"><Firefox /></g></Launch>
    <Launch label="Falkon">
      <circle cx="13" cy="13" r="13" fill="#c08be8" /><path d="M2 8C8 2 18 3 21 9c2 3 0 5-2 4-3-1-5 3-3 8l-1 5C6 25 0 19 2 8z" fill="#f6f3fa" />
      <path d="M5 22c0-6 3-11 9-12M9 24c0-5 2-9 6-11" stroke="#c79bd8" fill="none" strokeWidth="1.500" /><circle cx="17" cy="8.500" r="1" fill="#222" /><path d="M20 10l3 1-1 3-3-2z" fill="#f5b82e" />
    </Launch>
    <Launch label="Sphère"><circle cx="13" cy="13" r="12.500" fill="#1fb6cc" /><path d="M.5 12C2 3 14-3 22 4c-4 7-12 9-21.500 8z" fill="#62d0de" /></Launch>
    <Launch label="Dossier personnel">
      <path d="M1 4h10l2 3h12v16H1z" fill="#4e86cc" /><path d="M1 9h24v14H1z" fill="#6f9fdb" /><path d="M18 10l-6 5h2v5h3v-3h2v3h3v-5h2z" fill="#3465a4" />
    </Launch>
    <span className="h-3 w-px shrink-0 border-l border-dotted border-[#8f826a]" />
    <Task text="SimpleScr..." faint>
      <circle cx="10" cy="10" r="9.500" fill="#5b5b5b" /><circle cx="10" cy="10" r="6.800" fill="#4a8a5a" /><path d="M10 3.200a6.800 6.800 0 0 1 0 13.600z" fill="#a65a3d" /><circle cx="10" cy="10" r="3" fill="#3a6f9c" />
    </Task>
    <Task text="/home/jp/...">
      <path d="M3 1h14v18H3z" fill="#dfe9f5" stroke="#6b86a8" /><path d="M5 3h10v6H5zM5 11h10v6H5z" fill="#82b0e8" stroke="#4c7fc0" strokeWidth=".7" /><path d="M8 5h4M8 13h4" stroke="#fff" strokeWidth="1.500" />
    </Task>
    <Task text="FreeCAD 0..." active><FreeCad /></Task>
    <Task text="01.mp4 - A...">
      <path d="M1 8h18v11H1z" fill="#1d1d1d" /><path d="M.500 4 18 .8l.7 3L1 7z" fill="#1d1d1d" /><path d="m4 3.500 2 3M8 2.800l2 3M12 2l2 3M3 8l1.500 3M8 8l1.500 3M13 8l1.500 3M1 11h18" stroke="#e5d0ae" />
    </Task>
    <Task text="Contenu d..."><Firefox /></Task>
    <svg viewBox="0 0 57 22" role="img" aria-label="Météo" className="ml-1 h-[22px] w-[57px] shrink-0">
      <g stroke="#999" strokeWidth=".7"><circle cx="6" cy="10" r="5.600" fill="#fff" /><circle cx="18" cy="10" r="5.600" fill="#fff" /></g>
      <circle cx="7" cy="8" r="2.300" fill="#174e80" /><circle cx="19" cy="8" r="2.300" fill="#174e80" />
      <path d="M39 0l2 3 4-1 0 4 4 1-2 4 2 4-4 1-1 4-4-1-3 3-3-3-4 0 0-4-3-2 2-4-2-3 4-2 0-4 4 1z" fill="#f39a1c" />
      <path d="M38 18c-3-4 1-7 4-6 2-4 8-3 8 1 5 0 4 6 1 6H40z" fill="#f0f1f2" stroke="#8c9097" strokeWidth=".8" />
    </svg>
    <span className="w-7 shrink-0 text-xs whitespace-nowrap text-[#3e3a35]">4 °C</span>
    <svg viewBox="0 0 64 28" role="img" aria-label="Réseau et volume" className="h-7 w-16 shrink-0">
      <path d="M2 9l6-2 6 2c0 6-2 9-6 11-4-2-6-5-6-11z" fill="#dfdbd2" />
      <path d="M18 11h10V8l4 4.500-4 4V14H18zM32 16v3H22v3l-4-4.500 4-3.500v2z" fill="#222" />
      <path d="M34 12h3l4-4v13l-4-4h-3z" fill="#b0aca4" stroke="#666" strokeWidth=".7" /><path d="M44 8v13" stroke="#3a6fb8" strokeWidth="2.400" />
      <circle cx="56" cy="7" r="6.500" fill="#1e1e1e" /><circle cx="56" cy="7" r="4.600" fill="#227a55" /><path d="M56 2.500a4.500 4.500 0 0 1 0 9z" fill="#3769b8" />
    </svg>
    <svg viewBox="0 0 22 26" role="img" aria-label="Presse-papiers" className="ml-[15px] h-[26px] w-[22px] shrink-0">
      <path d="M2 4h18v20H2z" fill="none" stroke="#333" strokeWidth="1.700" /><path d="M6 3.500h3a2 2 0 0 1 4 0h3v5H6z" fill="#333" />
    </svg>
    <span className="ml-1.5 h-[26px] w-[47px] shrink-0 bg-white" />
    <span className="ml-0.5 h-[26px] w-8 shrink-0 border-b border-dotted border-[#333] bg-white" />
    <span className="ml-2 h-[29px] w-1 shrink-0 border-x border-[#cfc3b0]" />
    <span className="mt-5 h-1.5 w-[3px] shrink-0 bg-[#3ec46a]" />
    <span className="ml-2 w-[42px] shrink-0 text-[17px] whitespace-nowrap text-[#3aa335]">36 °C</span>
    <span className="w-[63px] shrink-0 font-['Noto_Sans',sans-serif] text-sm font-bold whitespace-nowrap text-[#2b5a9c]">2,20 GHz</span>
    <span className="w-[22px] shrink-0 font-['Noto_Sans',sans-serif] text-[11px] text-[#333]">net</span>
    <span className="h-[29px] w-1.5 shrink-0 border-x border-[#cfc3b0]" />
    <span className="flex w-[93px] shrink-0 flex-col items-center text-[#701048]">
      <time className="font-['DejaVu_Sans',sans-serif] text-sm leading-[15px] font-bold">17:29:13</time>
      <time className="text-xs leading-[14px] text-[#8a3560]">sam.11/02/2023</time>
    </span>
    <span className="flex w-5 shrink-0 text-xs text-[#444]">c<b className="bg-[#22e522] font-normal text-[#135a13]">N</b>s</span>
    <svg viewBox="0 0 24 24" role="img" aria-label="Session" className="ml-1 size-6 shrink-0">
      <circle cx="12" cy="12" r="11.800" fill="#22303d" /><path d="M17 8V6.500H8.500l-2 2v7l2 2H17V16M16 10h-5v4h5" fill="none" stroke="#fff" strokeWidth="2" />
    </svg>
  </footer>
);

/* ---------- page ---------- */

export default function App() {
  return (
    <div className="flex h-screen w-full flex-col overflow-hidden bg-[#eeeeee] font-['Open_Sans','Noto_Sans',sans-serif] text-[11px] leading-4 text-[#303234]">
      <div className="flex h-0.5 shrink-0">
        <span className="w-[262px] bg-[#5f88bd]" />
        <span className="flex-1 bg-[#f1e6cb]" />
        <span className="w-[262px] bg-[#5f88bd]" />
      </div>
      <header className="flex h-[11px] shrink-0 items-center bg-linear-to-b from-[#5b9ae6] to-[#3f82d6]">
        <span className="flex w-14 items-center pl-0.5"><svg viewBox="0 0 20 20" aria-hidden="true" className="size-2.5"><FreeCad /></svg></span>
        <h1 className="flex-1 pr-11 text-center text-[11px] leading-[11px] font-semibold text-white text-shadow-xs">FreeCAD 0.21.0</h1>
        <span className="flex w-14 justify-between pr-1 text-white">
          {["M4 9V2M1.500 4.500 4 2l2.500 2.500", "M2 7.500h4", "M3 1h4v4H3zM1 4h4v4H1z", "m1.500 1.500 5.500 6M7 1.500l-5.500 6"].map((d, i) => (
            <button key={d} type="button" aria-label={["Épingler", "Réduire", "Restaurer", "Fermer"][i]} className="size-2">
              <svg viewBox="0 0 8 9" fill="none" stroke="currentColor" strokeWidth="1.500" className="size-2"><path d={d} /></svg>
            </button>
          ))}
        </span>
      </header>
      <nav className="flex h-5 shrink-0 items-start gap-3 border-b border-[#c9c9c9] bg-[#eeeeee] pl-[9px]">
        {menus.map(([pre, key, rest]) => (
          <button key={pre + key + rest} type="button" className="leading-4 whitespace-nowrap">
            {pre}{key ? <span className="underline underline-offset-2">{key}</span> : null}{rest}
          </button>
        ))}
      </nav>
      <Bar>
        <Tools names={["new", "open", "save"]} /><Sep />
        <Tools names={["undo", "v:undo list"]} />
        <Tools names={["redo", "v:redo list"]} /><Sep />
        <Tools names={["refresh"]} /><Sep />
        <Tools names={["whats"]} /><Grip />
        <span className="relative flex h-[22px] w-[152px] shrink-0 items-center rounded-xs border border-[#b3b3b3] bg-linear-to-b from-[#fdfdfd] to-[#f0f0f0]">
          <svg viewBox="0 0 20 20" aria-hidden="true" className="pointer-events-none absolute left-1 size-3.5">
            <Box t="#6d9bd3" l="#3465a4" r="#1d3f6d" /><path d="M0 5l8-3 3 3-4 7-6-3z" fill="#edd400" stroke="#4e4300" />
          </svg>
          <select aria-label="Atelier" defaultValue="Part Design" className="h-full w-full appearance-none bg-transparent pl-[21px] outline-none">
            <option>Part Design</option>
          </select>
          <span className="pointer-events-none absolute right-[7px]"><Caret /></span>
        </span>
        <Grip />
        <Tools names={["record", "stop", "macros", "play"]} /><Grip />
        <Tools names={["web", "part", "grid"]} />
      </Bar>
      <Bar>
        <Tools names={["fitall", "fitsel", "style", "v:style list", "bbox"]} /><Sep />
        <Tools names={["left", "right", "linkview", "v:link list"]} /><Sep />
        <Tools names={["zoom", "v:zoom list", "iso"]} /><Sep />
        <Tools names={["vfront", "vtop", "vright"]} /><Sep />
        <Tools names={["vrear", "vbottom", "vleft"]} /><Sep />
        <Tools names={["ruler"]} /><Grip />
        <Tools names={["tape", "tapeang"]} /><Sep />
        <Tools names={["taperef", "tapedel", "tapeall", "tape3d", "tapedelta"]} />
      </Bar>
      <Bar>
        <Tools names={["ypart", "folder", "link", "linkgrp", "v:link type"]} /><Grip />
        <Tools names={["body", "sketch", "import", "mapsketch", "valid"]} /><Sep />
        <Tools names={["point", "line", "plane", "lcs", "shape", "subshape", "clone"]} /><Grip />
        <Tools names={["pad", "revol", "loft", "pipe", "helix", "prim", "v:additive list"]} /><Sep />
        <Tools names={["pocket", "hole", "groove", "subloft", "subpipe", "subhelix", "subprim", "v:subtractive list"]} /><Sep />
        <Tools names={["mirror", "linpat", "polpat", "multi"]} /><Sep />
        <Tools names={["fillet", "chamfer", "draft", "thick"]} /><Sep />
        <Tools names={["bool"]} />
      </Bar>
      <main className="flex min-h-0 flex-1 gap-1.5 pt-px">
        <SidePanel />
        <section className="flex min-w-0 flex-1 flex-col">
          <div className="relative min-h-0 flex-1 bg-[#aaaabd]">
            <Model />
            <NavCube />
            <AxisCross />
          </div>
          <div role="tablist" className="flex h-[27px] shrink-0">
            <div className="flex w-[134px] items-center gap-1 border-r border-b border-[#c6c6c6] bg-[#f8f8f8] pl-2.5">
              <Pic name="freecad" small />
              <button type="button" role="tab" aria-selected="true" className="flex-1 text-left whitespace-nowrap">mat_demo : 1*</button>
              <button type="button" aria-label="Fermer l'onglet" className="mr-3.5 size-3">
                <svg viewBox="0 0 12 12" className="size-3" stroke="#222" strokeWidth="2"><path d="M2 1.500 10 11M10 1.500 1.500 11M9 11h3" /></svg>
              </button>
            </div>
          </div>
        </section>
      </main>
      <div role="status" className="flex h-[29px] shrink-0 items-center pr-0.5 pl-0.5">
        <span className="flex-1">Preselected: mat_demo.Body.Pad001.Edge7 (-42.938694 mm, -25.000000 mm, 2.000000 mm)</span>
        <button type="button" className="flex items-center gap-0.5">
          <svg viewBox="0 0 14 14" aria-hidden="true" className="size-3.5">
            <path d="M3 5c2-4 6-4 8-2M11 9c-2 4-6 4-8 2" fill="none" stroke="#333" strokeWidth="1.500" /><circle cx="11.500" cy="4" r="1.900" fill="#222" /><circle cx="2.500" cy="10.500" r="2.200" fill="#222" />
          </svg>
          Gesture
          <span className="ml-1.5"><Caret /></span>
        </button>
        <span className="ml-2">319,06 mm x 172,98 mm</span>
      </div>
      <Taskbar />
    </div>
  );
}
